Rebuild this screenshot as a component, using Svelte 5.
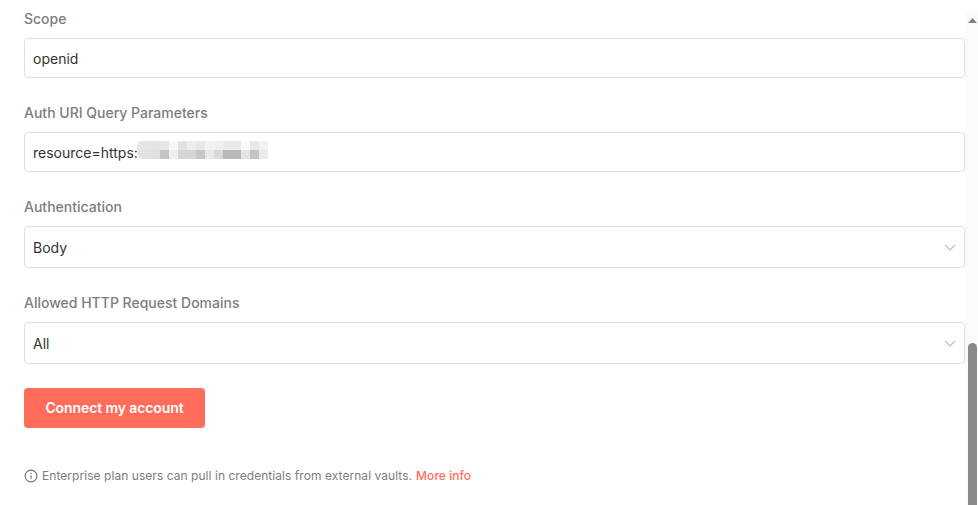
<script>
  const top = ['#e6e6e6','#e4e4e4','#e4e4e4','#e6e6e6','#f7f7f7','#e2e2e2','#ededed','#e8e8e8','#f2f2f2','#efefef','#eaeaea','#eaeaea','#fafafa','#e8e8e8','#f2f2f2'];
  const bottom = ['#e4e4e4','#e2e2e2','#e0e0e0','#c4c4c4','#eeeeee','#d5d5d5','#d5d5d5','#c6c6c6','#e8e8e8','#d8d8d8','#b8b8b8','#b8b8b8','#e4e4e4','#c4c4c4','#ebebeb'];
</script>

<div class="page">
  <main class="form">
    <div class="field">
      <div class="label">Scope</div>
      <div class="control input"><span>openid</span></div>
    </div>
    <div class="field">
      <div class="label">Auth URI Query Parameters</div>
      <div class="control input">
        <span>resource=https:</span>
        <span class="mask" aria-hidden="true">
          {#each [top, bottom] as row}
            <span class="mask-row">
              {#each row as c}
                <i style="background:{c}"></i>
              {/each}
            </span>
          {/each}
        </span>
      </div>
    </div>
    <div class="field">
      <div class="label">Authentication</div>
      <div class="control select">
        <span>Body</span>
        <svg width="12" height="7" viewBox="0 0 12 7"><path d="M1 1l5 5 5-5" fill="none" stroke="#bcbcbc" stroke-width="1.1"/></svg>
      </div>
    </div>
    <div class="field last">
      <div class="label">Allowed HTTP Request Domains</div>
      <div class="control select">
        <span>All</span>
        <svg width="12" height="7" viewBox="0 0 12 7"><path d="M1 1l5 5 5-5" fill="none" stroke="#bcbcbc" stroke-width="1.1"/></svg>
      </div>
    </div>
    <button class="connect">Connect my account</button>
    <p class="note">
      <svg width="14" height="14" viewBox="0 0 14 14"><circle cx="7" cy="7" r="5.9" fill="none" stroke="#707070" stroke-width="1.1"/><path d="M7 6.4v3.4" stroke="#707070" stroke-width="1.2"/><circle cx="7" cy="4.4" r=".75" fill="#707070"/></svg>
      <span>Enterprise plan users can pull in credentials from external vaults.</span>
      <span class="link">More info</span>
    </p>
  </main>
  <div class="scrollbar">
    <svg class="arrow" width="9" height="5" viewBox="0 0 9 5"><path d="M4.5 0L9 5H0z" fill="#808080"/></svg>
    <div class="thumb"></div>
  </div>
</div>

<style>
  :global(body) { margin: 0; background: #fff; overflow: hidden; }
  .page {
    display: flex;
    height: 505px;
    font-family: Inter, "Liberation Sans", sans-serif;
    overflow: hidden;
  }
  .form {
    flex: 1;
    min-width: 0;
    padding: 9px 0 0 24px;
    display: flex;
    flex-direction: column;
    align-items: stretch;
  }
  .field { margin-bottom: 25px; }
  .field.last { margin-bottom: 24px; }
  .label {
    font-size: 14px;
    font-weight: 500;
    line-height: 20px;
    color: #7d7d7d;
    margin-bottom: 9px;
  }
  .control {
    box-sizing: border-box;
    display: flex;
    align-items: center;
    border: 1px solid #e0e0e0;
    border-radius: 4px;
    padding: 0 8px;
    font-size: 14px;
    color: #333;
    background: #fff;
    position: relative;
  }
  .input { height: 40px; }
  .select { height: 42px; justify-content: space-between; }
  .mask {
    position: absolute;
    left: 112px;
    top: 8px;
    display: flex;
    flex-direction: column;
    border-radius: 5px 0 0 5px;
    overflow: hidden;
  }
  .mask-row { display: flex; height: 9px; }
  .mask-row i { display: block; width: 9px; height: 9px; }
  .mask-row i:first-child { width: 5px; }
  .connect {
    align-self: flex-start;
    width: 181px;
    height: 40px;
    border: 0;
    border-radius: 4px;
    background: #ff6d5a;
    color: #fff;
    font: 600 14px Inter, "Liberation Sans", sans-serif;
    letter-spacing: -0.1px;
    padding: 0 0 1px;
  }
  .note {
    margin: 39px 0 0;
    display: flex;
    align-items: center;
    gap: 4px;
    font-size: 12px;
    line-height: 18px;
    letter-spacing: 0.05px;
    color: #7d7d7d;
  }
  .link { color: #ff6d5a; font-weight: 500; }
  .scrollbar {
    flex: none;
    width: 13px;
    margin-top: 12px;
    background: #fafafa;
    position: relative;
  }
  .arrow { position: absolute; left: 3px; top: 6px; }
  .thumb {
    position: absolute;
    left: 3px;
    width: 9px;
    top: 331px;
    bottom: 0;
    background: #8a8a8a;
    border-radius: 5px 5px 0 0;
  }
</style>
